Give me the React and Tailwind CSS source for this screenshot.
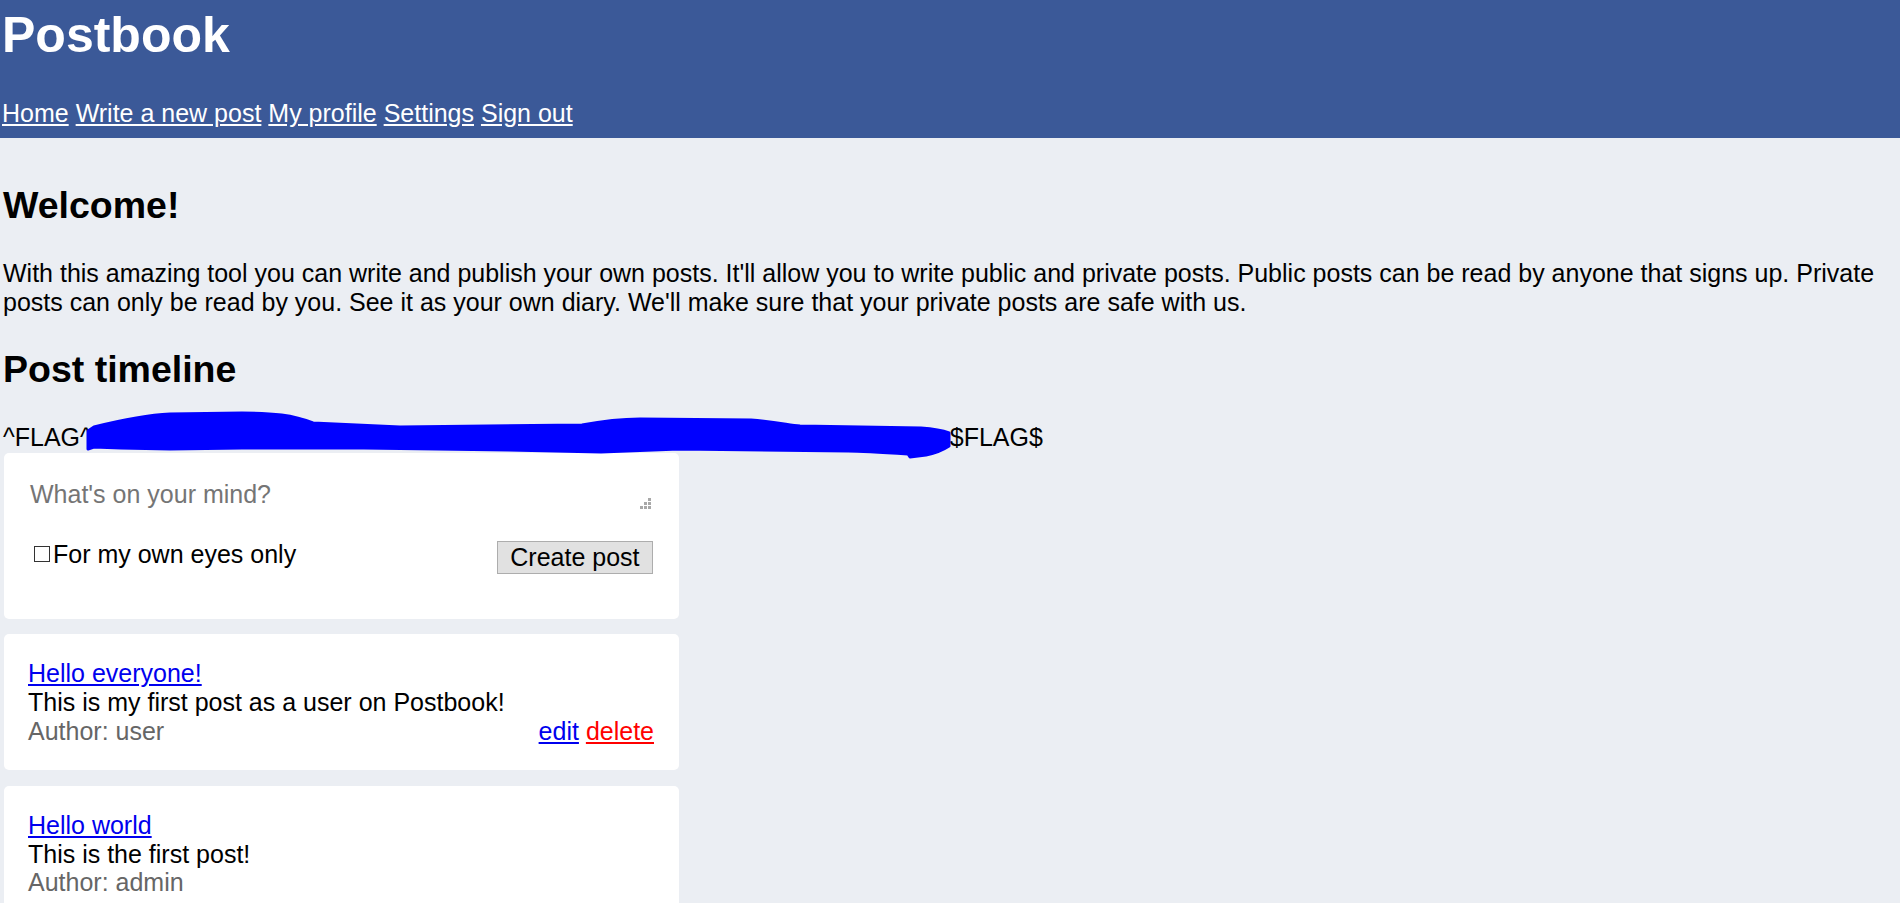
import { useState } from 'react'

const posts = [
  { id: 2, title: 'Hello everyone!', body: 'This is my first post as a user on Postbook!', author: 'user', mine: true },
  { id: 1, title: 'Hello world', body: 'This is the first post!', author: 'admin', mine: false },
]

function Scribble() {
  // the hand-drawn redaction over the flag
  return (
    <svg
      className="absolute left-[-4px] top-[-14px] z-10 overflow-visible"
      width="862"
      height="50"
      viewBox="0 0 862 50"
    >
      <path
        d="M0,22 L6,18 C30,12 60,6 82,5 L154,4 C185,4 205,6 225,14 L312,18 C400,17 460,16 494,16 C515,12 530,10 552,10 L663,11 C690,13 700,16 712,17 L833,19 C848,20 856,22 861,24 L861,37 C855,41 848,44 838,46 L822,48 L820,45 C790,43 770,42 760,42 L591,40 L513,43 L421,41 L276,39 L154,39 L82,40 L33,39 L6,38 L0,40 Z"
        fill="#0000ff"
        stroke="#0000ff"
        strokeWidth="3"
        strokeLinejoin="round"
      />
    </svg>
  )
}

function Grip() {
  return (
    <svg className="absolute right-[4px] bottom-[2px]" width="11" height="11" viewBox="0 0 11 11">
      <g fill="#a8a8a8">
        <rect x="8" y="0" width="3" height="3" />
        <rect x="4" y="4" width="3" height="3" />
        <rect x="8" y="4" width="3" height="3" />
        <rect x="0" y="8" width="3" height="3" />
        <rect x="4" y="8" width="3" height="3" />
        <rect x="8" y="8" width="3" height="3" />
      </g>
    </svg>
  )
}

export default function App() {
  const [text, setText] = useState('')
  const [priv, setPriv] = useState(false)

  return (
    <div className="font-['Liberation_Sans',Arial,sans-serif] text-[25px] leading-[1.15] text-black">
      <header className="bg-[#3b5998] text-white pl-[2px] pt-[7px] pb-[11px]">
        <h1 className="text-[50px] font-bold leading-[1.15]">Postbook</h1>
        <nav className="mt-[34px]">
          <a href="#" className="underline">Home</a>{' '}
          <a href="#" className="underline">Write a new post</a>{' '}
          <a href="#" className="underline">My profile</a>{' '}
          <a href="#" className="underline">Settings</a>{' '}
          <a href="#" className="underline">Sign out</a>
        </nav>
      </header>

      <main className="bg-[#ebeef3] min-h-screen px-[3px] pt-[46px] pb-10">
        <h2 className="text-[37.5px] font-bold leading-[1.15]">Welcome!</h2>
        <p className="mt-[31.5px]">
          With this amazing tool you can write and publish your own posts. It'll allow you to write public and private posts. Public posts can be read by anyone that signs up. Private posts can only be read by you. See it as your own diary. We'll make sure that your private posts are safe with us.
        </p>

        <h2 className="mt-[32px] text-[37.5px] font-bold leading-[1.15]">Post timeline</h2>
        <p className="mt-[31.5px]">
          ^FLAG^<span className="relative inline-block w-[858px] align-top h-[28px]"><Scribble /></span>$FLAG$
        </p>

        <form className="mt-[1px] ml-px w-[675px] bg-white rounded-[5px] px-6 pt-[25px] pb-[45px]">
          <div className="relative">
            <textarea
              rows={1}
              value={text}
              onChange={(e) => setText(e.target.value)}
              placeholder="What's on your mind?"
              className="block w-full resize-none border border-white p-px leading-[1.15] outline-none placeholder:text-[#757575]"
            />
            <Grip />
          </div>
          <div className="mt-[30px] flex justify-between items-start">
            <label className="flex items-center -mt-px">
              <input
                type="checkbox"
                checked={priv}
                onChange={(e) => setPriv(e.target.checked)}
                className="appearance-none ml-[6px] mr-[3px] w-[16px] h-[16px] border border-[#333] bg-white checked:bg-[#333]"
              />
              <span>For my own eyes only</span>
            </label>
            <button
              type="button"
              className="h-[33px] mr-[2px] px-[12.5px] bg-[#e1e1e1] border border-[#adadad] leading-[1.15]"
            >
              Create post
            </button>
          </div>
        </form>

        {posts.map((post) => (
          <div key={post.id} className="mt-[15.6px] ml-px w-[675px] bg-white rounded-[5px] px-6 py-[25px]">
            <a href="#" className="text-[#0000ee] underline">{post.title}</a>
            <div>{post.body}</div>
            <div className="flex justify-between">
              <span className="text-[#666]">Author: {post.author}</span>
              {post.mine && (
                <span className="mr-px">
                  <a href="#" className="text-[#0000ee] underline">edit</a>{' '}
                  <a href="#" className="text-[#ff0000] underline">delete</a>
                </span>
              )}
            </div>
          </div>
        ))}
      </main>
    </div>
  )
}
